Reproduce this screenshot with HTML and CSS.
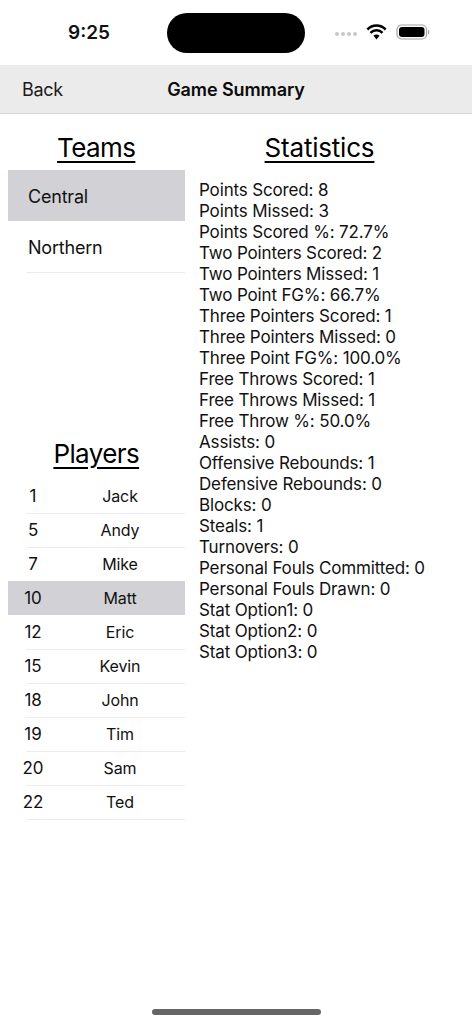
FILE: index.html
```html
<!DOCTYPE html>
<html lang="en">
<head>
<meta charset="utf-8">
<title>Game Summary</title>
<link rel="stylesheet" href="styles.css">
</head>
<body>
<div class="status">
  <span class="time">9:25</span>
  <span class="island"></span>
  <span class="indicators">
    <span class="dots"><i></i><i></i><i></i><i></i></span>
    <svg class="wifi" width="21" height="16" viewBox="0 0 21 16"><path d="M10.500 10.600c1.200 0 2.200.4 3 1.100l-3 3.700-3-3.700c.8-.7 1.800-1.100 3-1.100z" fill="#000"/><path d="M1.300 5.500C3.700 3.100 6.900 1.600 10.500 1.600s6.800 1.500 9.200 3.900M4.500 8.900C6 7.300 8.100 6.300 10.500 6.300s4.500 1 6 2.600" fill="none" stroke="#000" stroke-width="2.500"/></svg>
    <svg class="battery" width="34" height="16" viewBox="0 0 34 16"><rect x="1" y="1" width="29.500" height="14" rx="4.500" fill="none" stroke="#a3a3a3" stroke-width="1.200"/><rect x="3" y="3" width="25.500" height="10" rx="3" fill="#000"/><rect x="32" y="6" width="1.200" height="4" rx=".6" fill="#a3a3a3"/></svg>
  </span>
</div>
<header class="nav">
  <span class="back">Back</span>
  <span class="title">Game Summary</span>
</header>
<main class="content">
  <section class="left">
    <h2 class="heading">Teams</h2>
    <ul class="teams">
      <li class="team selected">Central</li>
      <li class="team">Northern</li>
    </ul>
    <h2 class="heading players-heading">Players</h2>
    <ul class="players">
      <li class="player"><span class="num">1</span><span class="name">Jack</span></li>
      <li class="player"><span class="num">5</span><span class="name">Andy</span></li>
      <li class="player before-selected"><span class="num">7</span><span class="name">Mike</span></li>
      <li class="player selected"><span class="num">10</span><span class="name">Matt</span></li>
      <li class="player"><span class="num">12</span><span class="name">Eric</span></li>
      <li class="player"><span class="num">15</span><span class="name">Kevin</span></li>
      <li class="player"><span class="num">18</span><span class="name">John</span></li>
      <li class="player"><span class="num">19</span><span class="name">Tim</span></li>
      <li class="player"><span class="num">20</span><span class="name">Sam</span></li>
      <li class="player"><span class="num">22</span><span class="name">Ted</span></li>
    </ul>
  </section>
  <section class="right">
    <h2 class="heading">Statistics</h2>
    <div class="stats">
      <div>Points Scored: 8</div>
      <div>Points Missed: 3</div>
      <div>Points Scored %: 72.7%</div>
      <div>Two Pointers Scored: 2</div>
      <div>Two Pointers Missed: 1</div>
      <div>Two Point FG%: 66.7%</div>
      <div>Three Pointers Scored: 1</div>
      <div>Three Pointers Missed: 0</div>
      <div>Three Point FG%: 100.0%</div>
      <div>Free Throws Scored: 1</div>
      <div>Free Throws Missed: 1</div>
      <div>Free Throw %: 50.0%</div>
      <div>Assists: 0</div>
      <div>Offensive Rebounds: 1</div>
      <div>Defensive Rebounds: 0</div>
      <div>Blocks: 0</div>
      <div>Steals: 1</div>
      <div>Turnovers: 0</div>
      <div>Personal Fouls Committed: 0</div>
      <div>Personal Fouls Drawn: 0</div>
      <div>Stat Option1: 0</div>
      <div>Stat Option2: 0</div>
      <div>Stat Option3: 0</div>
    </div>
  </section>
</main>
<div class="home"></div>
</body>
</html>
```
FILE: styles.css
```css
* { box-sizing: border-box; }
html, body { margin: 0; padding: 0; }
body {
  width: 472px;
  height: 1024px;
  overflow: hidden;
  background: #fff;
  color: #000;
  font-family: Inter, "Liberation Sans", sans-serif;
  position: relative;
}
ul { list-style: none; margin: 0; padding: 0; }
.status {
  height: 65px;
  position: relative;
}
.time {
  position: absolute;
  left: 68px;
  top: 21px;
  font-size: 19px;
  line-height: 24px;
  font-weight: 600;
  color: #111;
}
.island {
  position: absolute;
  left: 167px;
  top: 13px;
  width: 138px;
  height: 40px;
  border-radius: 20px;
  background: #000;
}
.indicators {
  position: absolute;
  left: 335px;
  top: 24px;
  display: flex;
  align-items: center;
}
.dots { display: flex; gap: 2px; margin-right: 9px; margin-top: 3px; }
.dots i { width: 4px; height: 4px; border-radius: 50%; background: #c8c8c8; display: block; }
.wifi { margin-right: 9px; }
.nav {
  height: 49px;
  background: #ebebeb;
  border-bottom: 1px solid #d6d6d6;
  position: relative;
  display: flex;
  align-items: center;
  justify-content: center;
}
.back {
  position: absolute;
  left: 22px;
  font-size: 18px;
  letter-spacing: -0.3px;
  color: #1a1a1a;
}
.title {
  font-size: 18px;
  font-weight: 600;
  letter-spacing: -0.1px;
  color: #0a0a0a;
}
.content {
  display: flex;
  padding-left: 8px;
}
.left { width: 176.500px; flex: none; }
.right { flex: 1; padding-left: 14.500px; }
.heading {
  margin: 0;
  height: 56px;
  padding-top: 16px;
  font-size: 26px;
  line-height: 35px;
  font-weight: 400;
  text-align: center;
  letter-spacing: -0.6px;
  text-decoration: underline;
  text-decoration-thickness: 1.500px;
  text-underline-offset: 4px;
}
.right .heading { margin-left: -14px; margin-right: 18px; height: 66px; letter-spacing: -0.2px; }
.team {
  height: 51px;
  padding: 2px 0 0 20px;
  display: flex;
  align-items: center;
  font-size: 18px;
  letter-spacing: -0.2px;
  color: #111;
}
.team:last-child { position: relative; height: 52px; padding-top: 0; }
.team:last-child::after, .player::after {
  content: "";
  position: absolute;
  left: 18px;
  right: 0;
  bottom: 0;
  height: 1px;
  background: #ececec;
}
.player::after { bottom: -1px; }
.team.selected, .player.selected { background: #d1d1d6; }
.players-heading { margin-top: 150px; height: 56px; padding-top: 13px; }
.player {
  height: 34px;
  position: relative;
  display: flex;
  align-items: center;
  font-size: 16px;
  letter-spacing: -0.1px;
  color: #111;
}
.player.selected::after, .player.before-selected::after { display: none; }
.num { width: 50px; text-align: center; flex: none; white-space: nowrap; font-size: 17px; }
.name { width: 124px; text-align: center; }
.stats {
  font-size: 17px;
  line-height: 21px;
  letter-spacing: -0.15px;
  color: #111;
  white-space: nowrap;
}
.home {
  position: absolute;
  left: 152px;
  top: 1009px;
  width: 169px;
  height: 6px;
  border-radius: 3px;
  background: #666;
}
```
